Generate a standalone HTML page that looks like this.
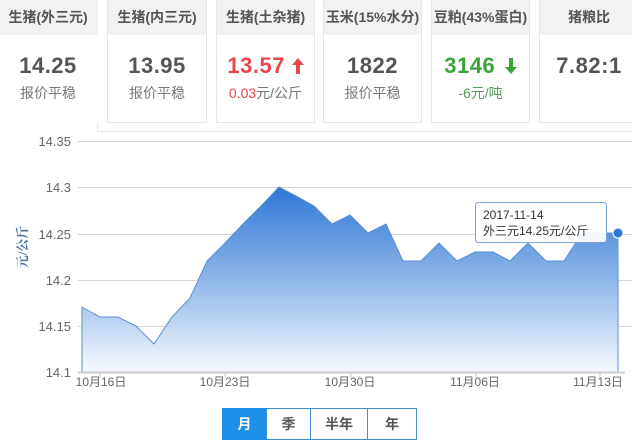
<!DOCTYPE html>
<html><head><meta charset="utf-8"><style>
*{margin:0;padding:0;box-sizing:border-box}
body{width:632px;height:441px;background:#fff;font-family:"Liberation Sans","Noto Sans CJK SC",sans-serif;position:relative;overflow:hidden}
.wrap{position:absolute;left:97px;top:0;width:540px;height:132px;border-left:1px solid #e3e3e3;border-bottom:1px solid #e3e3e3}
.card{position:absolute;top:0;height:123px;background:#fff;border:1px solid #e6e6e6;border-top:none;text-align:center}
.card .h{height:35px;background:#f2f2f2;color:#555;font-size:14px;font-weight:bold;line-height:34px;white-space:nowrap}
.card .v{margin-top:17px;font-size:22px;font-weight:bold;color:#555;line-height:28px;letter-spacing:0.5px}
.card .s{font-size:14px;color:#777;line-height:20px;margin-top:3px}
.red{color:#e8464d!important}.green{color:#3aa43a!important}
.btn{position:absolute;top:408px;height:32px;border:1px solid #3d8fd8;font-size:14px;font-weight:bold;color:#555;text-align:center;line-height:30px}
</style></head><body>
<div class="wrap"></div>
<div class="card" style="left:-2px;width:100px;border:none"><div class="h">生猪(外三元)</div><div class="v">14.25</div><div class="s">报价平稳</div></div>
<div class="card" style="left:107px;width:100px"><div class="h">生猪(内三元)</div><div class="v">13.95</div><div class="s">报价平稳</div></div>
<div class="card" style="left:216px;width:99px"><div class="h">生猪(土杂猪)</div><div class="v red">13.57 <svg width="12" height="16" viewBox="0 0 12 16" style="vertical-align:-1px"><path d="M6,0 L12,7 L8,7 L8,16 L4,16 L4,7 L0,7Z" fill="#e8464d"/></svg></div><div class="s"><span class="red">0.03</span>元/公斤</div></div>
<div class="card" style="left:323px;width:99px"><div class="h">玉米(15%水分)</div><div class="v">1822</div><div class="s">报价平稳</div></div>
<div class="card" style="left:431px;width:99px"><div class="h">豆粕(43%蛋白)</div><div class="v green">3146 <svg width="12" height="16" viewBox="0 0 12 16" style="vertical-align:-1px;margin-left:3px"><path d="M6,16 L12,9 L8,9 L8,0 L4,0 L4,9 L0,9Z" fill="#3aa43a"/></svg></div><div class="s" style="color:#5a9a5a">-6元/吨</div></div>
<div class="card" style="left:539px;width:100px"><div class="h">猪粮比</div><div class="v">7.82:1</div></div>
<svg width="632" height="441" style="position:absolute;left:0;top:0" font-family="Liberation Sans, Noto Sans CJK SC, sans-serif">
<defs><linearGradient id="g" x1="0" y1="187" x2="0" y2="372" gradientUnits="userSpaceOnUse"><stop offset="0" stop-color="#2f78d6"/><stop offset="0.5" stop-color="#8db6e8"/><stop offset="1" stop-color="#f6f9fe"/></linearGradient></defs>
<g stroke="#d6d6d6" stroke-width="1">
<line x1="78" y1="141.5" x2="632" y2="141.5"/><line x1="78" y1="187.5" x2="632" y2="187.5"/><line x1="78" y1="234.5" x2="632" y2="234.5"/><line x1="78" y1="280.5" x2="632" y2="280.5"/><line x1="78" y1="326.5" x2="632" y2="326.5"/></g>
<path d="M82,307 L100,317 118,317 136,326 154,344 172,317 190,298 207,261 225,243 243,224 261,206 279,187 296,196 314,206 332,224 350,215 368,233 386,224 403,261 421,261 439,243 457,261 475,252 493,252 510,261 528,243 546,261 564,261 582,233 600,233 618,233 L618,372 L82,372Z" fill="url(#g)" stroke="#5d8fd0" stroke-width="1"/>
<line x1="78" y1="372.5" x2="625" y2="372.5" stroke="#ccc" stroke-width="2"/>
<g stroke="#ccc"><line x1="100" y1="372" x2="100" y2="378"/><line x1="225" y1="372" x2="225" y2="378"/><line x1="351" y1="372" x2="351" y2="378"/><line x1="476" y1="372" x2="476" y2="378"/><line x1="600" y1="372" x2="600" y2="378"/></g>
<g fill="#666" font-size="13" text-anchor="end"><text x="71" y="146">14.35</text><text x="71" y="192">14.3</text><text x="71" y="239">14.25</text><text x="71" y="285">14.2</text><text x="71" y="331">14.15</text><text x="71" y="377">14.1</text></g>
<g fill="#666" font-size="12" text-anchor="middle"><text x="101" y="386">10月16日</text><text x="225" y="386">10月23日</text><text x="350" y="386">10月30日</text><text x="475" y="386">11月06日</text><text x="598" y="386">11月13日</text></g>
<text transform="translate(27,247) rotate(-90)" fill="#4a6fa5" font-size="13" font-family="Liberation Serif, Noto Serif CJK SC, serif" font-weight="bold" text-anchor="middle">元/公斤</text>
<rect x="475.5" y="202.5" width="131" height="40" rx="3" fill="#fff" fill-opacity="0.92" stroke="#7aa2d6"/>
<text x="483" y="219" font-size="12" fill="#333">2017-11-14</text>
<text x="483" y="235" font-size="12" fill="#333">外三元14.25元/公斤</text>
<circle cx="618" cy="233" r="5" fill="#2f78d6" stroke="#fff" stroke-width="1"/>
</svg>
<div class="btn" style="left:222px;width:45px;background:#1e8fe6;color:#fff;border-color:#1e8fe6">月</div>
<div class="btn" style="left:266px;width:45px">季</div>
<div class="btn" style="left:310px;width:58px">半年</div>
<div class="btn" style="left:367px;width:50px">年</div>
</body></html>
